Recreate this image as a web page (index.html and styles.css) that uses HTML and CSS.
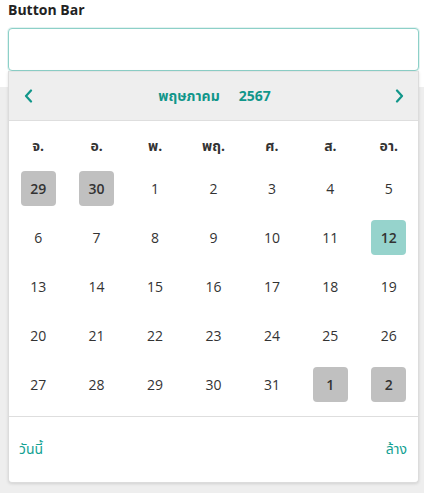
FILE: index.html
```html
<!DOCTYPE html>
<html lang="th">
<head>
<meta charset="utf-8">
<link rel="stylesheet" href="styles.css">
</head>
<body>
<div class="page">
  <div class="field">
    <label class="label">Button Bar</label>
    <div class="input-wrap">
      <input class="input" type="text">
      <div class="popup">
        <div class="head">
          <button class="nav" aria-label="prev">
            <svg width="12" height="14" viewBox="0 0 12 14"><path d="M8 1.5 L3 7 L8 12.5" fill="none" stroke="#11968a" stroke-width="2.2" stroke-linecap="round" stroke-linejoin="round"/></svg>
          </button>
          <div class="title"><span>พฤษภาคม</span><span>2567</span></div>
          <button class="nav" aria-label="next">
            <svg width="12" height="14" viewBox="0 0 12 14"><path d="M4 1.5 L9 7 L4 12.5" fill="none" stroke="#11968a" stroke-width="2.2" stroke-linecap="round" stroke-linejoin="round"/></svg>
          </button>
        </div>
        <div class="grid">
          <div class="dow">จ.</div><div class="dow">อ.</div><div class="dow">พ.</div><div class="dow">พฤ.</div><div class="dow">ศ.</div><div class="dow">ส.</div><div class="dow">อา.</div>

          <div class="d"><span class="other">29</span></div><div class="d"><span class="other">30</span></div><div class="d"><span>1</span></div><div class="d"><span>2</span></div><div class="d"><span>3</span></div><div class="d"><span>4</span></div><div class="d"><span>5</span></div>
          <div class="d"><span>6</span></div><div class="d"><span>7</span></div><div class="d"><span>8</span></div><div class="d"><span>9</span></div><div class="d"><span>10</span></div><div class="d"><span>11</span></div><div class="d"><span class="today">12</span></div>
          <div class="d"><span>13</span></div><div class="d"><span>14</span></div><div class="d"><span>15</span></div><div class="d"><span>16</span></div><div class="d"><span>17</span></div><div class="d"><span>18</span></div><div class="d"><span>19</span></div>
          <div class="d"><span>20</span></div><div class="d"><span>21</span></div><div class="d"><span>22</span></div><div class="d"><span>23</span></div><div class="d"><span>24</span></div><div class="d"><span>25</span></div><div class="d"><span>26</span></div>
          <div class="d"><span>27</span></div><div class="d"><span>28</span></div><div class="d"><span>29</span></div><div class="d"><span>30</span></div><div class="d"><span>31</span></div><div class="d"><span class="other">1</span></div><div class="d"><span class="other">2</span></div>
        </div>
        <div class="foot">
          <button class="link">วันนี้</button>
          <button class="link">ล้าง</button>
        </div>
      </div>
    </div>
  </div>
  <div class="below"></div>
</div>
</body>
</html>
```

FILE: styles.css
```css
html, body {
  margin: 0;
  padding: 0;
  height: 100%;
}
body {
  font-family: "Open Sans", "Noto Sans", "Noto Sans Thai", sans-serif;
  color: #333;
  background: #fff;
}
.page {
  display: flex;
  flex-direction: column;
  height: 100%;
}
.field {
  padding: 0 5px 0 8px;
  display: flex;
  flex-direction: column;
  gap: 8px;
}
.label {
  font-size: 14px;
  font-weight: 700;
  line-height: 20px;
  color: #222;
}
.input-wrap {
  position: relative;
  z-index: 2;
}
.input {
  box-sizing: border-box;
  display: block;
  width: 100%;
  height: 43px;
  border: 1px solid #8dd0c8;
  border-radius: 4px;
  outline: none;
  box-shadow: 0 0 0 1px rgba(141, 208, 200, 0.25);
  background: #fff;
  font: inherit;
}
.below {
  flex: 1;
  background: #eeeeee;
  margin-top: 16px;
}
.popup {
  position: absolute;
  left: 0;
  right: 0;
  top: 43px;
  background: #fff;
  border: 1px solid #dcdcdc;
  border-top: none;
  border-radius: 0 0 4px 4px;
  box-shadow: 0 1px 3px rgba(0, 0, 0, 0.12);
}
.head {
  height: 50px;
  background: #eeeeee;
  border-bottom: 1px solid #dedede;
  border-top: 1px solid #e4e4e4;
  display: flex;
  align-items: center;
  justify-content: space-between;
  padding: 0 13px 0 14px;
  box-sizing: border-box;
}
.nav {
  border: none;
  background: none;
  padding: 0;
  width: 12px;
  height: 14px;
  display: flex;
}
.title {
  display: flex;
  gap: 19px;
  font-size: 14px;
  font-weight: 700;
  color: #11968a;
  margin-left: 1px;
}
.grid {
  display: grid;
  grid-template-columns: repeat(7, 1fr);
  grid-template-rows: 35px;
  grid-auto-rows: 49px;
  padding: 8px 0 7px;
  border-bottom: 1px solid #dedede;
}
.grid .dow {
  display: flex;
  align-items: center;
  justify-content: center;
  font-size: 14px;
  font-weight: 700;
  color: #333;
}
.d {
  display: flex;
  align-items: center;
  justify-content: center;
}
.d span {
  width: 35px;
  height: 35px;
  border-radius: 4px;
  display: flex;
  align-items: center;
  justify-content: center;
  font-size: 14px;
  color: #333;
}
.d span.other {
  background: #c0c0c0;
  font-weight: 600;
}
.d span.today {
  background: #96d3cc;
  font-weight: 600;
}
.foot {
  height: 65px;
  display: flex;
  align-items: center;
  justify-content: space-between;
  padding: 0 11px 0 10px;
}
.link {
  border: none;
  background: none;
  font-family: "Open Sans", "Noto Sans", "Noto Sans Thai", sans-serif;
  font-size: 14px;
  color: #12a192;
  padding: 0;
}
```
